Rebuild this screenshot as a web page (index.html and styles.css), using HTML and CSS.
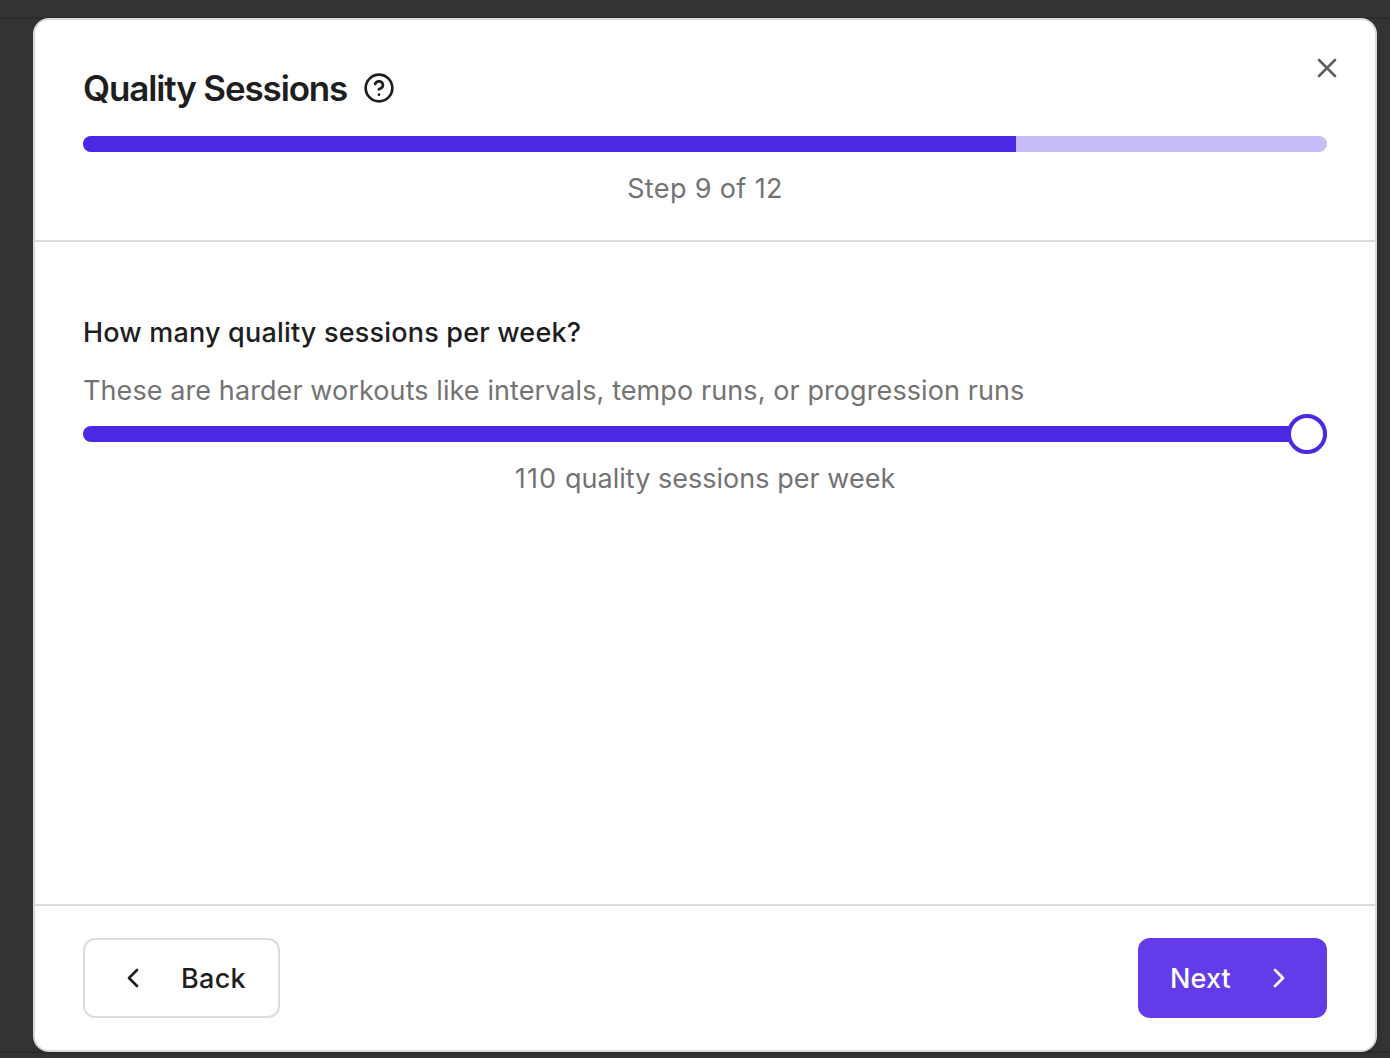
FILE: index.html
```html
<!DOCTYPE html>
<html lang="en">
<head>
<meta charset="utf-8">
<title>Quality Sessions</title>
<link rel="stylesheet" href="styles.css">
</head>
<body>
<main class="dialog">
  <header class="header">
    <div class="title-row">
      <h1 class="title">Quality Sessions</h1>
      <svg class="help" viewBox="0 0 24 24"><circle cx="12" cy="12" r="10"/><path d="M9.09 9a3 3 0 0 1 5.83 1c0 2-3 3-3 3"/><path d="M12 17h.01"/></svg>
    </div>
    <div class="progress"><div class="progress-fill" style="width:75%"></div></div>
    <p class="step">Step 9 of 12</p>
    <button class="close" aria-label="Close"><svg viewBox="0 0 24 24"><path d="M18 6 6 18M6 6l12 12"/></svg></button>
  </header>
  <section class="body">
    <h2 class="question">How many quality sessions per week?</h2>
    <p class="hint">These are harder workouts like intervals, tempo runs, or progression runs</p>
    <div class="slider"><div class="track"></div><div class="thumb"></div></div>
    <p class="value"><span class="count">110</span> quality sessions per week</p>
  </section>
  <footer class="footer">
    <button class="btn back"><svg viewBox="0 0 24 24"><path d="m15 18-6-6 6-6"/></svg><span>Back</span></button>
    <button class="btn next"><span>Next</span><svg viewBox="0 0 24 24"><path d="m9 18 6-6-6-6"/></svg></button>
  </footer>
</main>
</body>
</html>
```
FILE: styles.css
```css
* { box-sizing: border-box; }
body {
  margin: 0;
  height: 1058px;
  padding: 18px 13px 6px 33px;
  overflow: hidden;
  background:
    linear-gradient(#2b2b2b, #2b2b2b) 0 17px / 100% 2px no-repeat,
    linear-gradient(#2b2b2b, #2b2b2b) 0 1051px / 100% 2px no-repeat,
    #333;
  font-family: Inter, sans-serif;
  font-size: 27px;
  line-height: 40px;
  color: #1e1e1f;
}
h1, h2, p { margin: 0; font-size: inherit; font-weight: 400; }
svg { display: block; flex: none; fill: none; stroke: currentColor; stroke-width: 2; stroke-linecap: round; stroke-linejoin: round; }
button { font: inherit; color: inherit; padding: 0; border: 0; background: none; }
.dialog {
  height: 1034px;
  display: flex;
  flex-direction: column;
  background: #fff;
  border: 2px solid #d9d9d9;
  border-radius: 16px;
  box-shadow: 0 8px 12px -8px rgba(0, 0, 0, .2);
}
.header { position: relative; height: 222px; padding: 50px 48px 0; border-bottom: 2px solid #dcdcdc; }
.title-row { display: flex; align-items: center; gap: 16px; height: 36px; }
.title { font-size: 35px; line-height: 36px; font-weight: 600; letter-spacing: -1.14px; white-space: nowrap; }
.help { width: 32px; height: 32px; }
.progress { height: 16px; margin-top: 30px; border-radius: 8px; background: #c8bdf8; overflow: hidden; }
.progress-fill { height: 100%; background: #4c27e4; }
.step { margin-top: 17px; text-align: center; color: #737373; letter-spacing: .36px; }
.close { position: absolute; top: 32px; right: 32px; color: #606060; }
.close svg { width: 32px; height: 32px; }
.body { flex: 1; padding: 71px 48px 0; }
.question { font-weight: 500; letter-spacing: .19px; white-space: nowrap; }
.hint { margin-top: 18px; color: #737373; letter-spacing: .09px; white-space: nowrap; }
.slider { display: flex; align-items: center; height: 40px; margin-top: 3px; }
.track { flex: 1; height: 16px; border-radius: 8px; background: #4c27e4; }
.thumb { width: 40px; height: 40px; margin-left: -40px; border: 4px solid #4c27e4; border-radius: 50%; background: #fff; }
.value { margin-top: 5px; text-align: center; color: #737373; letter-spacing: .02px; }
.count { letter-spacing: 1.2px; }
.footer { display: flex; justify-content: space-between; height: 146px; padding: 32px 48px; border-top: 2px solid #dcdcdc; }
.btn { display: flex; align-items: center; height: 80px; border-radius: 12px; font-weight: 500; }
.btn svg { width: 32px; height: 32px; }
.btn span { padding-top: 1px; }
.back { width: 197px; padding-left: 32px; gap: 32px; border: 2px solid #dcdcdc; letter-spacing: .3px; }
.next { width: 189px; padding-left: 32px; gap: 32px; background: #623ce8; color: #fff; letter-spacing: .1px; }
```
